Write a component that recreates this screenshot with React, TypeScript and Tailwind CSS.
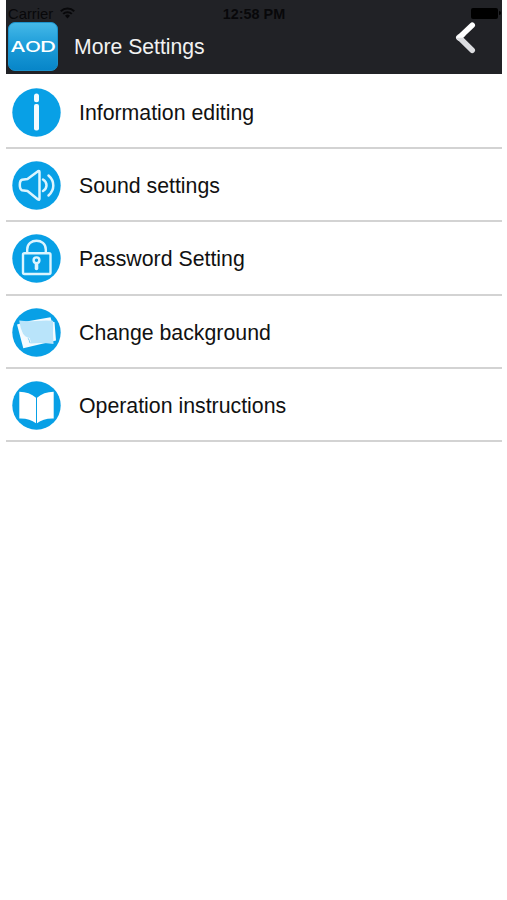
import React from "react";

/* =======================
   TYPES
======================= */
interface SettingItem {
  id: number;
  label: string;
  icon: React.ReactNode;
}

/* =======================
   MAIN SCREEN
======================= */
const App: React.FC = () => {
  return (
    <main className="min-h-[900px] bg-white pl-[6px] pr-[5px] font-['Liberation_Sans',Arial,sans-serif]">
      <Header />
      <ul className="pt-[1.5px]">
        {settings.map((item) => (
          <SettingRow key={item.id} item={item} />
        ))}
      </ul>
    </main>
  );
};

/* =======================
   HEADER
======================= */
const Header = () => (
  <header className="h-[74px] bg-[#212226] overflow-hidden">
    {/* Status bar */}
    <div className="h-[22px] grid grid-cols-3 items-center pt-[6px] text-[#08080a] leading-4 whitespace-nowrap">
      <div className="flex items-center pl-[2px]">
        <span className="text-[14.8px]">Carrier</span>
        <svg className="ml-[7px] -mt-[3px] w-[15px] h-[12px]" viewBox="0 0 15 12" fill="none" stroke="currentColor" strokeWidth="2">
          <path d="M0.8 4.2a9.5 9.5 0 0 1 13.4 0M3.2 6.9a6.1 6.1 0 0 1 8.6 0" />
          <path d="M7.5 11.4 5 8.8a3.6 3.6 0 0 1 5 0z" fill="currentColor" stroke="none" />
        </svg>
      </div>
      <span className="text-center text-[14.4px] font-bold">12:58 PM</span>
      <div className="flex justify-end items-center pr-[1px] -mt-[2px]">
        <span className="w-[27px] h-[11px] rounded-[2px] bg-black" />
        <span className="ml-px w-[2px] h-[4px] rounded-r bg-black" />
      </div>
    </div>

    {/* Title bar */}
    <div className="flex items-start">
      <svg className="ml-[2px] w-[50px] h-[49px]" viewBox="0 0 50 49">
        <defs>
          <linearGradient id="logo" x1="0" y1="0" x2="0" y2="1">
            <stop offset="0" stopColor="#46b9e8" />
            <stop offset="0.5" stopColor="#1b9bd8" />
            <stop offset="1" stopColor="#0785c8" />
          </linearGradient>
        </defs>
        <rect x="0.5" y="0.5" width="49" height="48" rx="6.5" fill="url(#logo)" stroke="#1b92cc" />
        <g fontFamily="Inter, sans-serif" fontSize="15" fontWeight="500" fill="#fff">
          <text x="2.5" y="30" textLength="15" lengthAdjust="spacingAndGlyphs">A</text>
          <text x="17" y="30" textLength="16" lengthAdjust="spacingAndGlyphs">O</text>
          <text x="32" y="30" textLength="16" lengthAdjust="spacingAndGlyphs">D</text>
        </g>
      </svg>
      <h1 className="ml-[16px] mt-[11px] text-[21.2px] leading-7 text-[#f2f2f2]">More Settings</h1>
      <button type="button" aria-label="Back" className="ml-auto mr-[26px]">
        <svg className="w-[21px] h-[32px]" viewBox="0 0 21 32" fill="none" strokeWidth="5.6">
          <path d="M17.2 3.3 4 15.8" stroke="#fff" strokeLinecap="round" />
          <path d="M17.2 28.2 4 15.2" stroke="#dcdde0" strokeLinecap="round" />
          <path d="M0.6 15.7 6 10.8 10.5 13.5 8 15.7z" fill="#fff" />
        </svg>
      </button>
    </div>
  </header>
);

/* =======================
   ROW
======================= */
const SettingRow = ({ item }: { item: SettingItem }) => (
  <li className="h-[73.35px] flex items-center pl-[6px] pt-[2px] border-b-2 border-[#d3d3d3]">
    <svg className="w-[49px] h-[49px] shrink-0" viewBox="0 0 49 49" fill="none" strokeLinecap="round" strokeLinejoin="round">
      <circle cx="24.5" cy="24.5" r="24.2" fill="#08a0e6" />
      {item.icon}
    </svg>
    <span className="ml-[18px] mt-px text-[21.3px] leading-7 text-[#111]">{item.label}</span>
  </li>
);

/* =======================
   DATA
======================= */
const settings: SettingItem[] = [
  {
    id: 1,
    label: "Information editing",
    icon: (
      <g fill="#f2fbff">
        <rect x="22" y="5.5" width="5" height="8.8" rx="2.5" />
        <rect x="22" y="16" width="5" height="26.5" rx="2" />
      </g>
    ),
  },
  {
    id: 2,
    label: "Sound settings",
    icon: (
      <g stroke="#dcf5ff" strokeWidth="2.5">
        <path d="M10 18.8 15.5 18 26 10.2q1.5-.8 1.5 1V37.5q0 1.8-1.5 1L15.5 30 10 29.2Q7.8 28.5 7.8 24T10 18.8z" />
        <path d="M31 18.5q3.5 2 3.5 5.7T31 30" />
        <path d="M36.5 14.5q4.8 4.2 4.8 10T36.5 34.5" />
      </g>
    ),
  },
  {
    id: 3,
    label: "Password Setting",
    icon: (
      <g stroke="#dcf5ff" strokeWidth="2.4">
        <rect x="11" y="19.2" width="27.5" height="20.8" rx="1.5" />
        <path d="M15.2 18.5V15.5C15.2 3.8 33.8 3.8 33.8 15.5V18.5" />
        <circle cx="24.5" cy="26.3" r="2.9" />
        <path d="M24.5 30.5V34.5" strokeWidth="3.6" />
      </g>
    ),
  },
  {
    id: 4,
    label: "Change background",
    icon: (
      <>
        <path d="M5 16.5 17 13 38.5 9.2 40 14 42.5 14 44 32.5 11.3 40.3z" fill="#f4fbff" />
        <path d="M7.2 12.5q8 1.2 17 .4t17-.2q-.6 12 .3 23.2-11-1.3-22.5-.5Q9 27.5 7.2 12.5z" fill="#b9e4fa" />
        <path d="M10.5 25q2.8 4.5 7.2 5l1.5 5.2q-6.2-3.4-8.7-10.2z" fill="#f4fbff" />
        <path d="M18 34.8q-.6-2.6-1.6-4.2" stroke="#7ccff4" strokeWidth="1" />
      </>
    ),
  },
  {
    id: 5,
    label: "Operation instructions",
    icon: (
      <g fill="#fff">
        <path d="M7.3 10.8Q17.5 11 24 16.8V42.3Q17.5 37.2 7.3 37.6z" />
        <path d="M41.7 10.8Q31.5 11 25 16.8V42.3Q31.5 37.2 41.7 37.6z" />
      </g>
    ),
  },
];

export default App;
